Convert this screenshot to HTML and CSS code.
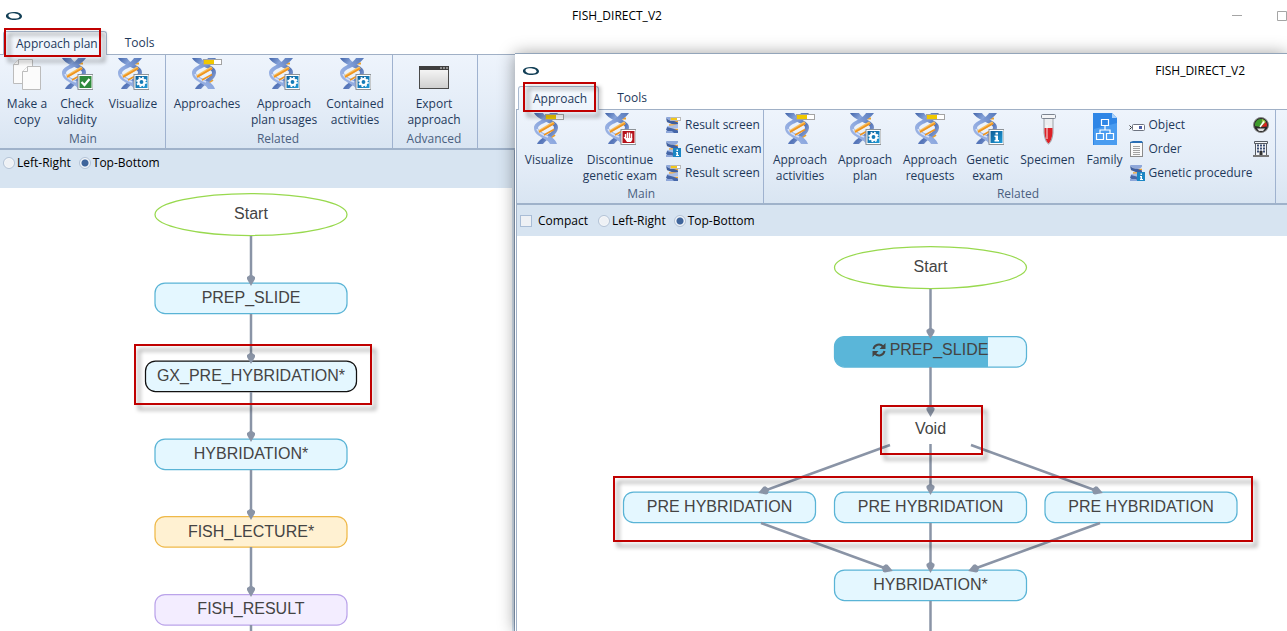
FILE: index.html
```html
<!DOCTYPE html>
<html lang="en">
<head>
<meta charset="utf-8">
<title>FISH_DIRECT_V2</title>
<link rel="stylesheet" href="styles.css">
</head>
<body>
<svg class="defs" aria-hidden="true">
  <defs>
    <linearGradient id="strand" x1="0" y1="0" x2="1" y2="1">
      <stop offset="0" stop-color="#3f62a8"/><stop offset=".3" stop-color="#8ba7dc"/><stop offset=".6" stop-color="#5474b8"/><stop offset="1" stop-color="#b4c6ec"/>
    </linearGradient>
    <linearGradient id="strand2" x1="1" y1="0" x2="0" y2="1">
      <stop offset="0" stop-color="#5577b8"/><stop offset=".5" stop-color="#8aa6de"/><stop offset="1" stop-color="#a9bde8"/>
    </linearGradient>
    <linearGradient id="pane" x1="0" y1="0" x2="0" y2="1">
      <stop offset="0" stop-color="#fbfbfb"/><stop offset="1" stop-color="#cfcfcf"/>
    </linearGradient>
    <linearGradient id="blue" x1="0" y1="0" x2="1" y2="1">
      <stop offset="0" stop-color="#0d5c96"/><stop offset="1" stop-color="#1f9bd8"/>
    </linearGradient>
    <marker id="tip" markerUnits="userSpaceOnUse" markerWidth="14" markerHeight="10" refX="8" refY="5" orient="auto">
      <path class="head" d="M0 4 L2 1 L4 1 L11 5 L4 9 L2 9 L0 6Z"/>
    </marker>
    <symbol id="helix" viewBox="0 0 32 32">
      <path d="M13 5.500 L22 5.500M14 27 L22 22" stroke="#eda22c" stroke-width="2"/>
      <path d="M1 0 L10 0 C13 6 26 8 25 15 C24 23 15 24 10 31 L4 31 C8 23 21 21 21 14 C20 10 6 8 1 0Z" fill="url(#strand)"/>
      <path d="M17 0 L25 0 C19 9 6 10 5 15 C6 21 22 22 24 31 L17 31 C15 25 1 24 1 15 C1 8 13 7 17 0Z" fill="url(#strand2)"/>
      <path d="M4 16 C5 20 10 22 15 24" fill="none" stroke="#d5e0f8" stroke-width="1.500"/>
      <path d="M6 18.500 L21 9.500" stroke="#f8c060" stroke-width="3"/>
      <path d="M6 19 L21 10.500M11 22 L21 16.500" stroke="#ee9420" stroke-width="1.600"/>
    </symbol>
    <symbol id="helix-progress" viewBox="0 0 32 32">
      <use href="#helix" width="32" height="32"/>
      <rect x="12.500" y="1.500" width="18" height="5" fill="#fff" stroke="#a3a3a3"/>
      <path d="M13 2h10v4H13z" fill="#f0c800"/>
    </symbol>
    <symbol id="helix-gear" viewBox="0 0 32 32">
      <use href="#helix" width="32" height="32"/>
      <rect x="17" y="16.500" width="15" height="15" fill="#fff" stroke="#8d9297"/>
      <path d="M18.500 18h12v12h-12z" fill="url(#blue)"/>
      <circle cx="24.500" cy="24" r="3" fill="none" stroke="#fff" stroke-width="2.200"/>
      <circle cx="24.500" cy="24" r="4.500" fill="none" stroke="#fff" stroke-width="1.600" stroke-dasharray="1.770 1.770"/>
    </symbol>
    <symbol id="helix-check" viewBox="0 0 32 32">
      <use href="#helix" width="32" height="32"/>
      <rect x="17" y="16.500" width="15" height="15" fill="#fff" stroke="#8d9297"/>
      <path d="M18.500 18h12v12h-12z" fill="#2f8a3c"/>
      <path d="M20.500 24 L23.500 27 L28.500 21" fill="none" stroke="#fff" stroke-width="2.200"/>
    </symbol>
    <symbol id="helix-info" viewBox="0 0 32 32">
      <use href="#helix" width="32" height="32"/>
      <rect x="17" y="16.500" width="15" height="15" fill="#fff" stroke="#8d9297"/>
      <path d="M18.500 18h12v12h-12z" fill="url(#blue)"/>
      <path d="M23.500 19.500h2.500v2h-2.500zM22.500 22.500h3.500v4.500h1v1.500h-4.500v-1.500h1v-3h-1z" fill="#fff"/>
    </symbol>
    <symbol id="helix-stop" viewBox="0 0 32 32">
      <use href="#helix" width="32" height="32"/>
      <rect x="17" y="16.500" width="15" height="15" fill="#fff" stroke="#8d9297"/>
      <path d="M18.500 18h12v12h-12z" fill="#b5121b"/>
      <path d="M21.500 21v5M23.500 19.500v6M25.500 19.500v6M27.500 20.500v6" stroke="#fff" stroke-width="1.400"/>
      <path d="M19.500 24 L21 24 L22 25 H28.200 V27 L27 29 H23z" fill="#fff"/>
    </symbol>
    <symbol id="mini-helix" viewBox="0 0 16 16">
      <path d="M2 4.500h11M4 8h9M2 12.500h11" stroke="#f0a330" stroke-width="1.600"/>
      <path d="M1 0h12v1.500q-1 2-5 2.500Q2 3 1 0z" fill="#8ea7da"/>
      <path d="M1 1q3 3 8 3l4 1.500v2Q6 7.500 2 5z" fill="#3f5f9f"/>
      <path d="M13 7q-5 2-11 2v2q6 1 11 0z" fill="#a9bee8"/>
      <path d="M2 10q6 1 11 3.500V16H8Q3 15 1 13z" fill="#4566a8"/>
      <path d="M1 14h6l2 2H1z" fill="#8ea7da"/>
    </symbol>
    <symbol id="mini-progress" viewBox="0 0 16 16">
      <use href="#mini-helix" width="16" height="16"/>
      <rect x="5.500" y=".5" width="10" height="3" fill="#fff" stroke="#b9b9b9"/><path d="M6 1h6v2H6z" fill="#f2c71a"/>
    </symbol>
    <symbol id="mini-info" viewBox="0 0 16 16">
      <use href="#mini-helix" width="16" height="16"/>
      <path d="M8 7h8v9H8z" fill="#1b86c4"/><path d="M11.500 8.500h1.500v1.500h-1.500zM11 11h2v3h1v1h-3v-1h.5v-2H11z" fill="#fff"/>
    </symbol>
    <symbol id="logo" viewBox="0 0 16 10">
      <path fill-rule="evenodd" d="M0 4 C1 2 4 1 8 1 C13 1 16 3 16 5.500 C16 8 12 9 8 9 C3 9 -1 7 0 4Z M2.500 4 C2 6.500 6 8 10 7.500 C13 7 14 6 13.500 5 C13 3 9 2 6 2.300 C4 2.500 3 3 2.500 4Z" fill="#123f56"/>
    </symbol>
  </defs>
</svg>

<main class="desktop">
  <section class="window window-plan">
    <header class="titlebar">
      <svg class="logo"><use href="#logo"/></svg>
      <h1 class="title">FISH_DIRECT_V2</h1>
      <div class="controls">
        <button class="control" aria-label="Minimize"><svg width="10" height="10"><path d="M0 4.500h10" stroke="#a5a5a5"/></svg></button>
        <button class="control" aria-label="Maximize"><svg width="10" height="10"><path d="M.5.5h9v9h-9z" fill="none" stroke="#a5a5a5"/></svg></button>
      </div>
    </header>
    <nav class="tabs">
      <button class="tab active">Approach plan</button>
      <button class="tab">Tools</button>
    </nav>
    <div class="ribbon">
      <div class="group">
        <div class="items">
          <button class="tool w50"><svg class="icon" viewBox="0 0 32 32"><g fill="#fbfbfb" stroke="#bcbcbc"><path d="M2.500 25.500V6.500L7.500 1.500H21.500V25.500Z"/><path d="M2.500 6.500h5v-5" /><path d="M11.500 31.500V13.500L16.500 8.500H29.500V31.500Z"/><path d="M11.500 13.500h5v-5"/></g></svg><span>Make a copy</span></button>
          <button class="tool w50"><svg class="icon"><use href="#helix-check"/></svg><span>Check validity</span></button>
          <button class="tool w62"><svg class="icon"><use href="#helix-gear"/></svg><span>Visualize</span></button>
        </div>
        <div class="group-name">Main</div>
      </div>
      <div class="group">
        <div class="items">
          <button class="tool w74"><svg class="icon"><use href="#helix-progress"/></svg><span>Approaches</span></button>
          <button class="tool w80"><svg class="icon"><use href="#helix-gear"/></svg><span>Approach<br>plan usages</span></button>
          <button class="tool w62"><svg class="icon"><use href="#helix-gear"/></svg><span>Contained<br>activities</span></button>
        </div>
        <div class="group-name">Related</div>
      </div>
      <div class="group">
        <div class="items">
          <button class="tool w74"><svg class="icon" viewBox="0 0 32 32"><rect x="1.500" y="8.500" width="29" height="22" fill="url(#pane)" stroke="#4a4a4a"/><path d="M1 8h30v4H1z" fill="#3e3e3e"/><path d="M22 10h2m1 0h2m1 0h2" stroke="#ddd"/></svg><span>Export<br>approach</span></button>
        </div>
        <div class="group-name">Advanced</div>
      </div>
    </div>
    <div class="workspace">
      <div class="options">
        <label><input type="radio" name="plan-dir">Left-Right</label>
        <label><input type="radio" name="plan-dir" checked>Top-Bottom</label>
      </div>
      <div class="canvas">
        <svg class="diagram" width="511" height="443" viewBox="0 188 511 443">
          <g class="node">
            <ellipse class="start" cx="251" cy="214.500" rx="96" ry="21"/>
            <rect x="155" y="283" width="192" height="30.500" rx="10"/>
            <rect class="selected" x="145.500" y="361" width="211" height="30.500" rx="10"/>
            <rect x="155" y="439" width="192" height="30.500" rx="10"/>
            <rect class="lecture" x="155" y="516.500" width="192" height="30.500" rx="10"/>
            <rect class="result" x="155" y="594.500" width="192" height="30.500" rx="10"/>
          </g>
          <g class="edge">
            <path d="M251 236V283"/><path d="M251 314V361"/><path d="M251 392V439"/><path d="M251 470V517"/><path d="M251 547V594"/><path class="open" d="M251 625V631"/>
          </g>
          <g class="caption">
            <text x="251" y="219">Start</text>
            <text x="251" y="303">PREP_SLIDE</text>
            <text x="251" y="381">GX_PRE_HYBRIDATION*</text>
            <text x="251" y="459">HYBRIDATION*</text>
            <text x="251" y="537">FISH_LECTURE*</text>
            <text x="251" y="614">FISH_RESULT</text>
          </g>
        </svg>
      </div>
    </div>
  </section>

  <section class="window window-approach">
    <header class="titlebar">
      <svg class="logo"><use href="#logo"/></svg>
      <h2 class="title">FISH_DIRECT_V2</h2>
    </header>
    <nav class="tabs">
      <button class="tab active">Approach</button>
      <button class="tab">Tools</button>
    </nav>
    <div class="frame">
      <div class="ribbon">
        <div class="group snug">
          <div class="items">
            <button class="tool w56"><svg class="icon"><use href="#helix-progress"/></svg><span>Visualize</span></button>
            <button class="tool w86"><svg class="icon"><use href="#helix-stop"/></svg><span>Discontinue<br>genetic exam</span></button>
            <div class="stack">
              <button class="row"><svg class="mini"><use href="#mini-progress"/></svg>Result screen</button>
              <button class="row"><svg class="mini"><use href="#mini-info"/></svg>Genetic exam</button>
              <button class="row"><svg class="mini"><use href="#mini-progress"/></svg>Result screen</button>
            </div>
          </div>
          <div class="group-name">Main</div>
        </div>
        <div class="group">
          <div class="items">
            <button class="tool w65"><svg class="icon"><use href="#helix-progress"/></svg><span>Approach activities</span></button>
            <button class="tool w65"><svg class="icon"><use href="#helix-gear"/></svg><span>Approach<br>plan</span></button>
            <button class="tool w65"><svg class="icon"><use href="#helix-progress"/></svg><span>Approach requests</span></button>
            <button class="tool w50"><svg class="icon"><use href="#helix-info"/></svg><span>Genetic exam</span></button>
            <button class="tool w70"><svg class="icon" viewBox="0 0 32 32"><path d="M12 5h9v15q-1 9-4.500 11Q13 29 12 20Z" fill="#eceef0" stroke="#9da2a8"/><path d="M12.500 15h8v5q-1 8-4 10.500Q13.500 28 12.500 20Z" fill="#dc2127"/><path d="M15 12v14" stroke="#fff" stroke-opacity=".6" stroke-width="1.500"/><rect x="9.500" y="1.500" width="14" height="4" rx="1" fill="#f4f5f7" stroke="#7c8490"/></svg><span>Specimen</span></button>
            <button class="tool w44"><svg class="icon" viewBox="0 0 32 32"><path d="M4 0h19l5 5v27H4z" fill="#2f86e6"/><path d="M5 32V16L28 10v22z" fill="#4a9cf0"/><path d="M23 0l5 5h-5z" fill="#a9d1fb"/><path d="M12.500 6.500h7v6h-7zM7.500 20.500h7v6h-7zM17.500 20.500h7v6h-7zM16 13v4M11 20v-3h10v3" fill="none" stroke="#fff" stroke-width="1.200"/></svg><span>Family</span></button>
            <div class="stack wide">
              <button class="row"><svg class="mini" viewBox="0 0 16 16"><path d="M.5 8.500l2 2M.5 12.500l2-2" stroke="#333"/><rect x="3.500" y="7.500" width="12" height="6" rx="1" fill="#fff" stroke="#6d7380"/><path d="M10 9h3v3h-3z" fill="#4a5da8"/></svg>Object</button>
              <button class="row"><svg class="mini" viewBox="0 0 16 16"><rect x="1.500" y="1.500" width="12" height="14" fill="#fafafa" stroke="#8a8a8a"/><path d="M1 1l3-1h9l1 2H1z" fill="#2b6fb5"/><path d="M4 5.500h7M4 7.500h7M4 9.500h7M4 11.500h7M4 13.500h7" stroke="#a2a2a2"/></svg>Order</button>
              <button class="row"><svg class="mini"><use href="#mini-info"/></svg>Genetic procedure</button>
            </div>
            <div class="stack">
              <button class="row" aria-label="Dashboard"><svg class="mini" viewBox="0 0 16 16"><circle cx="8" cy="8" r="7.500" fill="#2b2b2b" stroke="#888"/><path d="M2 9A6 6 0 0 1 9 2L8 10z" fill="#3f9b2c"/><path d="M9 2A6 6 0 0 1 13 5L8 10z" fill="#9bd04a"/><path d="M13 5A6 6 0 0 1 14 9.500L8 10z" fill="#d8251c"/><path d="M7 10L11 4.500" stroke="#fff" stroke-width="1.400"/><path d="M4 11.500h8l-2 2.500H6z" fill="#ddd"/></svg></button>
              <button class="row" aria-label="Institution"><svg class="mini" viewBox="0 0 16 16"><path d="M1.500.5h13v2h-13zM2.500 2.500h11v12h-11z" fill="#f4f6f8" stroke="#555b63"/><path d="M4 4.500h8M4 7.500h8M4 10.500h8" stroke="#3c4f75" stroke-width="2" stroke-dasharray="2 1"/><path d="M6.500 10h3v5h-3z" fill="#333"/><path d="M0 15h16" stroke="#777" stroke-width="2"/></svg></button>
            </div>
          </div>
          <div class="group-name">Related</div>
        </div>
      </div>
      <div class="options">
        <label class="compact"><input type="checkbox">Compact</label>
        <label><input type="radio" name="approach-dir">Left-Right</label>
        <label><input type="radio" name="approach-dir" checked>Top-Bottom</label>
      </div>
      <div class="canvas">
        <svg class="diagram" width="770" height="395" viewBox="517 236 770 395">
          <g class="node">
            <ellipse class="start" cx="930.500" cy="267.500" rx="96" ry="21"/>
            <rect x="834.500" y="336.500" width="192" height="30.500" rx="10"/>
            <path class="done" d="M988 336.500H844.500a10 10 0 0 0-10 10v10.500a10 10 0 0 0 10 10H988Z"/>
            <rect x="623.500" y="492" width="192" height="30.500" rx="10"/>
            <rect x="834.500" y="492" width="192" height="30.500" rx="10"/>
            <rect x="1045" y="492" width="192" height="30.500" rx="10"/>
            <rect x="834.500" y="570" width="192" height="30.500" rx="10"/>
          </g>
          <g class="edge">
            <path d="M930.500 289V336"/><path d="M930.500 367V414"/><path d="M930.500 444V492"/>
            <path d="M890 445L761 492"/><path d="M971 445L1100 492"/>
            <path d="M761 523L890 570"/><path d="M930.500 523V570"/><path d="M1100 523L971 570"/>
            <path class="open" d="M930.500 601V631"/>
          </g>
          <g transform="translate(872 343)" fill="none" stroke="#444" stroke-width="2"><path d="M1.500 6A5.500 5.500 0 0 1 11 3.500M12.500 8A5.500 5.500 0 0 1 3 10.500"/><path d="M13.500 0v6H7.500zM.5 14V8h6z" fill="#444" stroke="none"/></g>
          <g class="caption">
            <text x="930.500" y="272">Start</text>
            <text x="939" y="355">PREP_SLIDE</text>
            <text x="930.500" y="434">Void</text>
            <text x="719.500" y="512">PRE HYBRIDATION</text>
            <text x="930.500" y="512">PRE HYBRIDATION</text>
            <text x="1141" y="512">PRE HYBRIDATION</text>
            <text x="930.500" y="590">HYBRIDATION*</text>
          </g>
        </svg>
      </div>
    </div>
  </section>

  <div class="mark mark-plan-tab"></div>
  <div class="mark mark-approach-tab"></div>
  <div class="mark mark-gx"></div>
  <div class="mark mark-void"></div>
  <div class="mark mark-pre"></div>
</main>
</body>
</html>
```
FILE: styles.css
```css
* { box-sizing: border-box; }

body {
  margin: 0;
  font: 12px/16px "Open Sans", "Noto Sans", sans-serif;
  color: #1e395b;
}

button { font: inherit; color: inherit; background: none; border: 0; padding: 0; margin: 0; }
.defs { position: absolute; width: 0; height: 0; }
.desktop { position: relative; height: 100vh; overflow: hidden; background: #fff; }

.window { display: flex; flex-direction: column; background: #fff; }
.window-plan { height: 100%; }
.window-approach {
  position: absolute;
  left: 515px; top: 54px; right: 0; bottom: 0;
  box-shadow: 0 -1px 0 #93a5ba, 0 0 16px rgba(0, 0, 0, .4);
}

.titlebar { display: flex; align-items: center; height: 31px; flex: none; padding-left: 6px; }
.logo { width: 16px; height: 10px; flex: none; }
.title { flex: 1; margin: 0; font-size: 12px; font-weight: 400; color: #000; text-align: center; }
.window-approach .titlebar { height: 32px; padding: 2px 42px 0 8px; }
.window-approach .title { text-align: right; }
.controls { display: flex; gap: 35px; padding-left: 20px; }
.control { width: 10px; height: 10px; }
.control svg { display: block; }

.tabs { display: flex; height: 23px; flex: none; padding-left: 3px; }
.tab { padding: 0 18px; border-radius: 3px 3px 0 0; }
.tab.active {
  padding: 0 8px 0 12px;
  background: linear-gradient(#f5f9fd, #eef4fc);
  border: 1px solid #a9b9cf;
  border-bottom: 0;
  margin-bottom: -1px;
  position: relative;
  z-index: 1;
}
.window-approach .tab.active { padding: 0 11px 0 14px; }

.ribbon {
  display: flex;
  flex: none;
  height: 96px;
  background: linear-gradient(#eef4fc, #e3ecf7 60%, #d9e5f2);
  border-top: 1px solid #a0b0c6;
  border-bottom: 2px solid #9fb2ca;
}
.group {
  display: flex;
  flex-direction: column;
  padding: 3px 6px 0 4px;
  border-right: 1px solid #9fb2cf;
}
.window-plan .group:first-child { padding: 3px 1px 0 2px; }
.group.snug { padding-right: 1px; }
.items { display: flex; height: 73px; }
.group-name { text-align: center; color: #4a5f7f; }

.tool { display: flex; flex-direction: column; align-items: center; gap: 6px; white-space: normal; }
.window-approach .tool { gap: 7px; }
.icon { width: 32px; height: 32px; flex: none; }
.w44 { width: 44px; }
.w50 { width: 50px; }
.w56 { width: 56px; }
.w62 { width: 62px; }
.w65 { width: 65px; }
.w70 { width: 70px; }
.w74 { width: 74px; }
.w80 { width: 80px; }
.w86 { width: 86px; }

.stack { display: flex; flex-direction: column; padding-left: 2px; }
.stack.wide { width: 124px; }
.row { display: flex; align-items: center; gap: 4px; height: 24px; white-space: nowrap; }
.mini { width: 16px; height: 16px; flex: none; }

.workspace {
  width: 40%;
  flex: 1;
  display: flex;
  flex-direction: column;
  min-height: 0;
  padding-right: 2px;
  background: #d7e4f1;
  border-right: 1px solid #8fa3bd;
}
.frame { flex: 1; display: flex; flex-direction: column; min-height: 0; margin-left: 1px; border-left: 1px solid #a0b0c6; }

.options { display: flex; align-items: flex-start; gap: 8px; flex: none; height: 38px; padding: 5px 3px; background: #d7e4f1; color: #000; }
.frame .options { height: 31px; padding: 8px 3px; }
.options label { display: flex; align-items: center; gap: 2px; }
.options .compact { gap: 6px; margin-right: 2px; }
.options input { appearance: none; margin: 0; width: 12px; height: 12px; border: 1px solid #a9bdd6; background: #eef1f5; }
.options input[type="radio"] { border-radius: 50%; border-color: #b4c3d6; box-shadow: inset 0 0 0 1px #f6f8fa; }
.options input[type="radio"]:checked { background: radial-gradient(circle, #3f659b 0 3px, #dde7f3 4px); }

.canvas { flex: 1; min-height: 0; overflow: hidden; background: #fff; }
.diagram { display: block; }
.node rect { fill: #e4f7ff; stroke: #5ab4d6; stroke-width: 1.25px; }
.node .start { fill: #fff; stroke: #98d94e; stroke-width: 1.25px; }
.node .selected { stroke: #111; }
.node .lecture { fill: #fff1d2; stroke: #efb949; }
.node .result { fill: #f3edff; stroke: #bba4ea; }
.node .done { fill: #5ab6d9; }
.edge path { fill: none; stroke: #8a94a6; stroke-width: 2.5px; marker-end: url(#tip); }
.edge .open { marker-end: none; }
.head { fill: #8a94a6; stroke: none; }
.caption text { font: 16px "Liberation Sans", Arial, sans-serif; fill: #444; text-anchor: middle; }

.mark { position: absolute; z-index: 5; border: 2px solid #c00000; filter: drop-shadow(4px 5px 2px rgba(0, 0, 0, .4)); pointer-events: none; }
.mark-plan-tab { left: 4px; top: 28px; width: 97px; height: 29px; }
.mark-approach-tab { left: 523px; top: 82px; width: 73px; height: 30px; }
.mark-gx { left: 134px; top: 344px; width: 238px; height: 61px; }
.mark-void { left: 880px; top: 405px; width: 103px; height: 50px; }
.mark-pre { left: 613px; top: 476px; width: 640px; height: 66px; }
```
